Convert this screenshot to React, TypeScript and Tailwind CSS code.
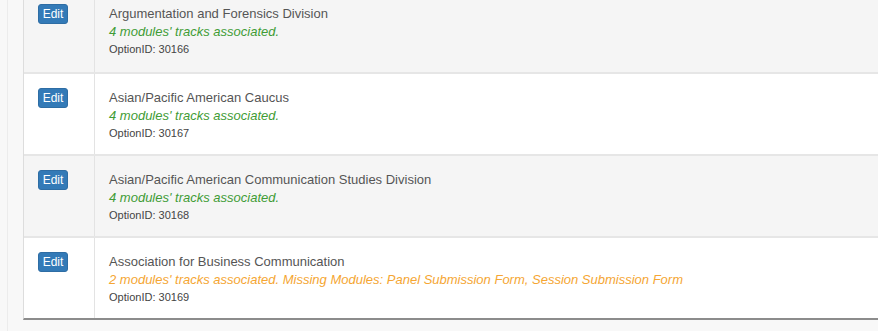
import React from "react";

type Row = {
  title: string;
  status: string;
  ok: boolean;
  id: number;
};

const rows: Row[] = [
  { title: "Argumentation and Forensics Division", status: "4 modules' tracks associated.", ok: true, id: 30166 },
  { title: "Asian/Pacific American Caucus", status: "4 modules' tracks associated.", ok: true, id: 30167 },
  { title: "Asian/Pacific American Communication Studies Division", status: "4 modules' tracks associated.", ok: true, id: 30168 },
  {
    title: "Association for Business Communication",
    status: "2 modules' tracks associated. Missing Modules: Panel Submission Form, Session Submission Form",
    ok: false,
    id: 30169,
  },
];

export default function App() {
  return (
    <div
      className="w-[878px] h-[331px] overflow-hidden bg-[#f8f8f8] flex"
      style={{ fontFamily: '"Liberation Sans", Arial, sans-serif' }}
    >
      <div className="w-[7px] shrink-0" />
      <div className="w-[16px] shrink-0 border-l border-[#ececec]" />
      <div className="flex-1 -mt-[10px]">
        <div className="border-l border-[#dddddd] border-b-2 border-b-[#8c8c8c]">
          {rows.map((r, i) => (
            <div
              key={r.id}
              className={`flex h-[82px] ${i === 0 ? "" : "border-t-2 border-[#e6e6e6]"} ${
                i % 2 === 0 ? "bg-[#f5f5f5]" : "bg-white"
              }`}
            >
              <div className="w-[71px] shrink-0 border-r border-[#e3e3e3] pl-[14px] pt-[14px] flex flex-col items-start">
                <div className="w-[30px] h-[20px] bg-[#337ab7] border border-[#2e6da4] rounded-[3px] text-white text-[12px] leading-[18px] text-center">
                  Edit
                </div>
              </div>
              <div className="flex-1 pl-[14px] pt-[14px]">
                <div className="text-[13px] leading-[20px] text-[#555555]">{r.title}</div>
                <div
                  className={`text-[13px] leading-[18px] italic -mt-[1px] ${
                    r.ok ? "text-[#3f9c35]" : "text-[#f5a633]"
                  }`}
                >
                  {r.status}
                </div>
                <div className="text-[11px] leading-[16px] text-[#444444]">OptionID: {r.id}</div>
              </div>
            </div>
          ))}
        </div>
      </div>
    </div>
  );
}
